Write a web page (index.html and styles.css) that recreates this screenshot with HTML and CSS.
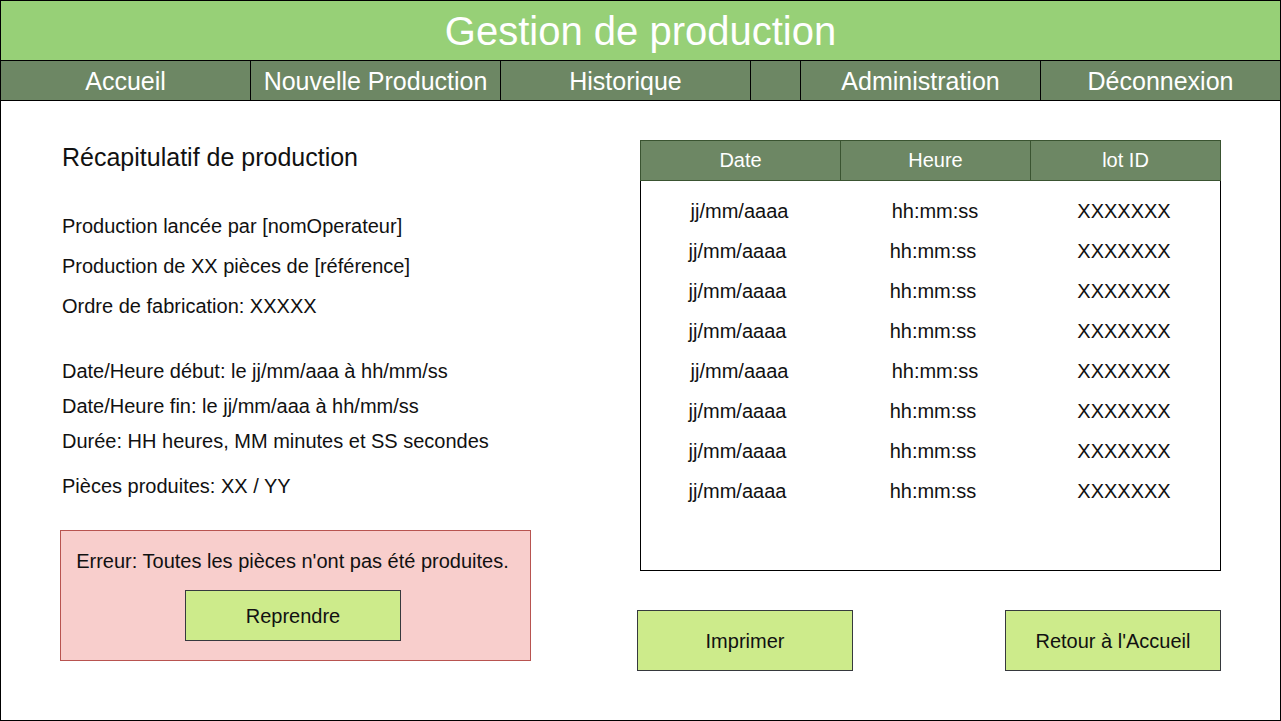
FILE: index.html
```html
<!DOCTYPE html>
<html lang="fr">
<head>
<meta charset="utf-8">
<title>Gestion de production</title>
<link rel="stylesheet" href="styles.css">
</head>
<body>
<div class="frame">
  <header class="header">Gestion de production</header>
  <nav class="nav">
    <div class="nav-item">Accueil</div>
    <div class="nav-item">Nouvelle Production</div>
    <div class="nav-item">Historique</div>
    <div class="nav-item"></div>
    <div class="nav-item">Administration</div>
    <div class="nav-item">Déconnexion</div>
  </nav>
  <main class="main">
    <section class="left">
      <h2 class="section-title">Récapitulatif de production</h2>
      <div class="group group-1">
        <p class="line">Production lancée par [nomOperateur]</p>
        <p class="line">Production de XX pièces de [référence]</p>
        <p class="line">Ordre de fabrication: XXXXX</p>
      </div>
      <div class="group group-2">
        <p class="line">Date/Heure début: le jj/mm/aaa à hh/mm/ss</p>
        <p class="line">Date/Heure fin: le jj/mm/aaa à hh/mm/ss</p>
        <p class="line">Durée: HH heures, MM minutes et SS secondes</p>
      </div>
      <p class="line pieces">Pièces produites: XX / YY</p>
      <div class="error-box">
        <p class="error-text">Erreur: Toutes les pièces n'ont pas été produites.</p>
        <button class="btn btn-resume">Reprendre</button>
      </div>
    </section>
    <section class="right">
      <div class="table">
        <div class="thead">
          <div class="th">Date</div>
          <div class="th">Heure</div>
          <div class="th">lot ID</div>
        </div>
        <div class="tbody">
          <div class="tr shift"><span>jj/mm/aaaa</span><span>hh:mm:ss</span><span>XXXXXXX</span></div>
          <div class="tr"><span>jj/mm/aaaa</span><span>hh:mm:ss</span><span>XXXXXXX</span></div>
          <div class="tr"><span>jj/mm/aaaa</span><span>hh:mm:ss</span><span>XXXXXXX</span></div>
          <div class="tr"><span>jj/mm/aaaa</span><span>hh:mm:ss</span><span>XXXXXXX</span></div>
          <div class="tr shift"><span>jj/mm/aaaa</span><span>hh:mm:ss</span><span>XXXXXXX</span></div>
          <div class="tr"><span>jj/mm/aaaa</span><span>hh:mm:ss</span><span>XXXXXXX</span></div>
          <div class="tr"><span>jj/mm/aaaa</span><span>hh:mm:ss</span><span>XXXXXXX</span></div>
          <div class="tr"><span>jj/mm/aaaa</span><span>hh:mm:ss</span><span>XXXXXXX</span></div>
        </div>
      </div>
      <div class="actions">
        <button class="btn btn-action">Imprimer</button>
        <button class="btn btn-action">Retour à l'Accueil</button>
      </div>
    </section>
  </main>
</div>
</body>
</html>
```

FILE: styles.css
```css
* {
  box-sizing: border-box;
}

html, body {
  margin: 0;
  padding: 0;
  background: #ffffff;
}

body {
  font-family: "Liberation Sans", Arial, Helvetica, sans-serif;
  color: #111111;
}

.frame {
  width: 1281px;
  height: 721px;
  border: 1px solid #000000;
  overflow: hidden;
}

.header {
  height: 59px;
  padding-top: 2px;
  background: #97d077;
  color: #ffffff;
  font-size: 40px;
  line-height: 57px;
  text-align: center;
}

.nav {
  display: grid;
  grid-template-columns: 249px 250px 250px 50px 240px 240px;
  height: 41px;
  background: #6d8764;
  border-top: 1px solid #000000;
  border-bottom: 1px solid #000000;
}

.nav-item {
  padding-top: 1px;
  color: #ffffff;
  font-size: 25px;
  line-height: 38px;
  text-align: center;
  white-space: nowrap;
}

.nav-item + .nav-item {
  border-left: 1px solid #000000;
}

.main {
  display: flex;
  padding-left: 59px;
}

.left {
  width: 471px;
}

.section-title {
  margin: 41px 0 0 2px;
  font-size: 25px;
  font-weight: normal;
  line-height: 30px;
}

.line {
  margin: 0 0 0 2px;
  font-size: 20px;
  white-space: nowrap;
}

.group-1 {
  margin-top: 34px;
}

.group-1 .line {
  line-height: 40px;
}

.group-2 {
  margin-top: 28px;
}

.group-2 .line {
  line-height: 35px;
}

.pieces {
  margin-top: 12px;
  line-height: 30px;
}

.error-box {
  margin-top: 29px;
  height: 131px;
  background: #f8cecc;
  border: 1px solid #b85450;
  padding-top: 15px;
}

.error-text {
  margin: 0;
  padding-right: 6px;
  font-size: 20px;
  line-height: 30px;
  text-align: center;
  white-space: nowrap;
}

.btn {
  display: flex;
  align-items: center;
  justify-content: center;
  background: #cdeb8b;
  border: 1px solid #36393d;
  font-family: "Liberation Sans", Arial, Helvetica, sans-serif;
  font-size: 20px;
  color: #111111;
  padding: 2px 0 0 0;
}

.btn-resume {
  margin: 14px 0 0 124px;
  width: 216px;
  height: 51px;
}

.right {
  margin-left: 106px;
  width: 584px;
}

.table {
  margin: 39px 0 0 3px;
  width: 581px;
  height: 431px;
  border: 1px solid #000000;
  border-top: none;
  display: flex;
  flex-direction: column;
}

.thead {
  display: grid;
  grid-template-columns: 199px 190px 190px;
  height: 41px;
  margin: 0 -1px;
  background: #6d8764;
  border: 1px solid #3a5431;
}

.th {
  color: #ffffff;
  font-size: 20px;
  line-height: 39px;
  text-align: center;
}

.th + .th {
  border-left: 1px solid #3a5431;
}

.tbody {
  padding-top: 10px;
}

.tr {
  display: grid;
  grid-template-columns: 199px 190px 190px;
  height: 40px;
  font-size: 20px;
  line-height: 40px;
  text-align: center;
}

.tr span:nth-child(1) {
  padding-right: 6px;
}

.tr span:nth-child(2) {
  padding-right: 4px;
}

.tr span:nth-child(3) {
  padding-right: 2px;
}

.tr.shift span:nth-child(1) {
  padding-right: 2px;
}

.tr.shift span:nth-child(2) {
  padding-right: 0;
}

.actions {
  display: flex;
  justify-content: space-between;
  margin-top: 39px;
}

.btn-action {
  width: 216px;
  height: 61px;
}
```
